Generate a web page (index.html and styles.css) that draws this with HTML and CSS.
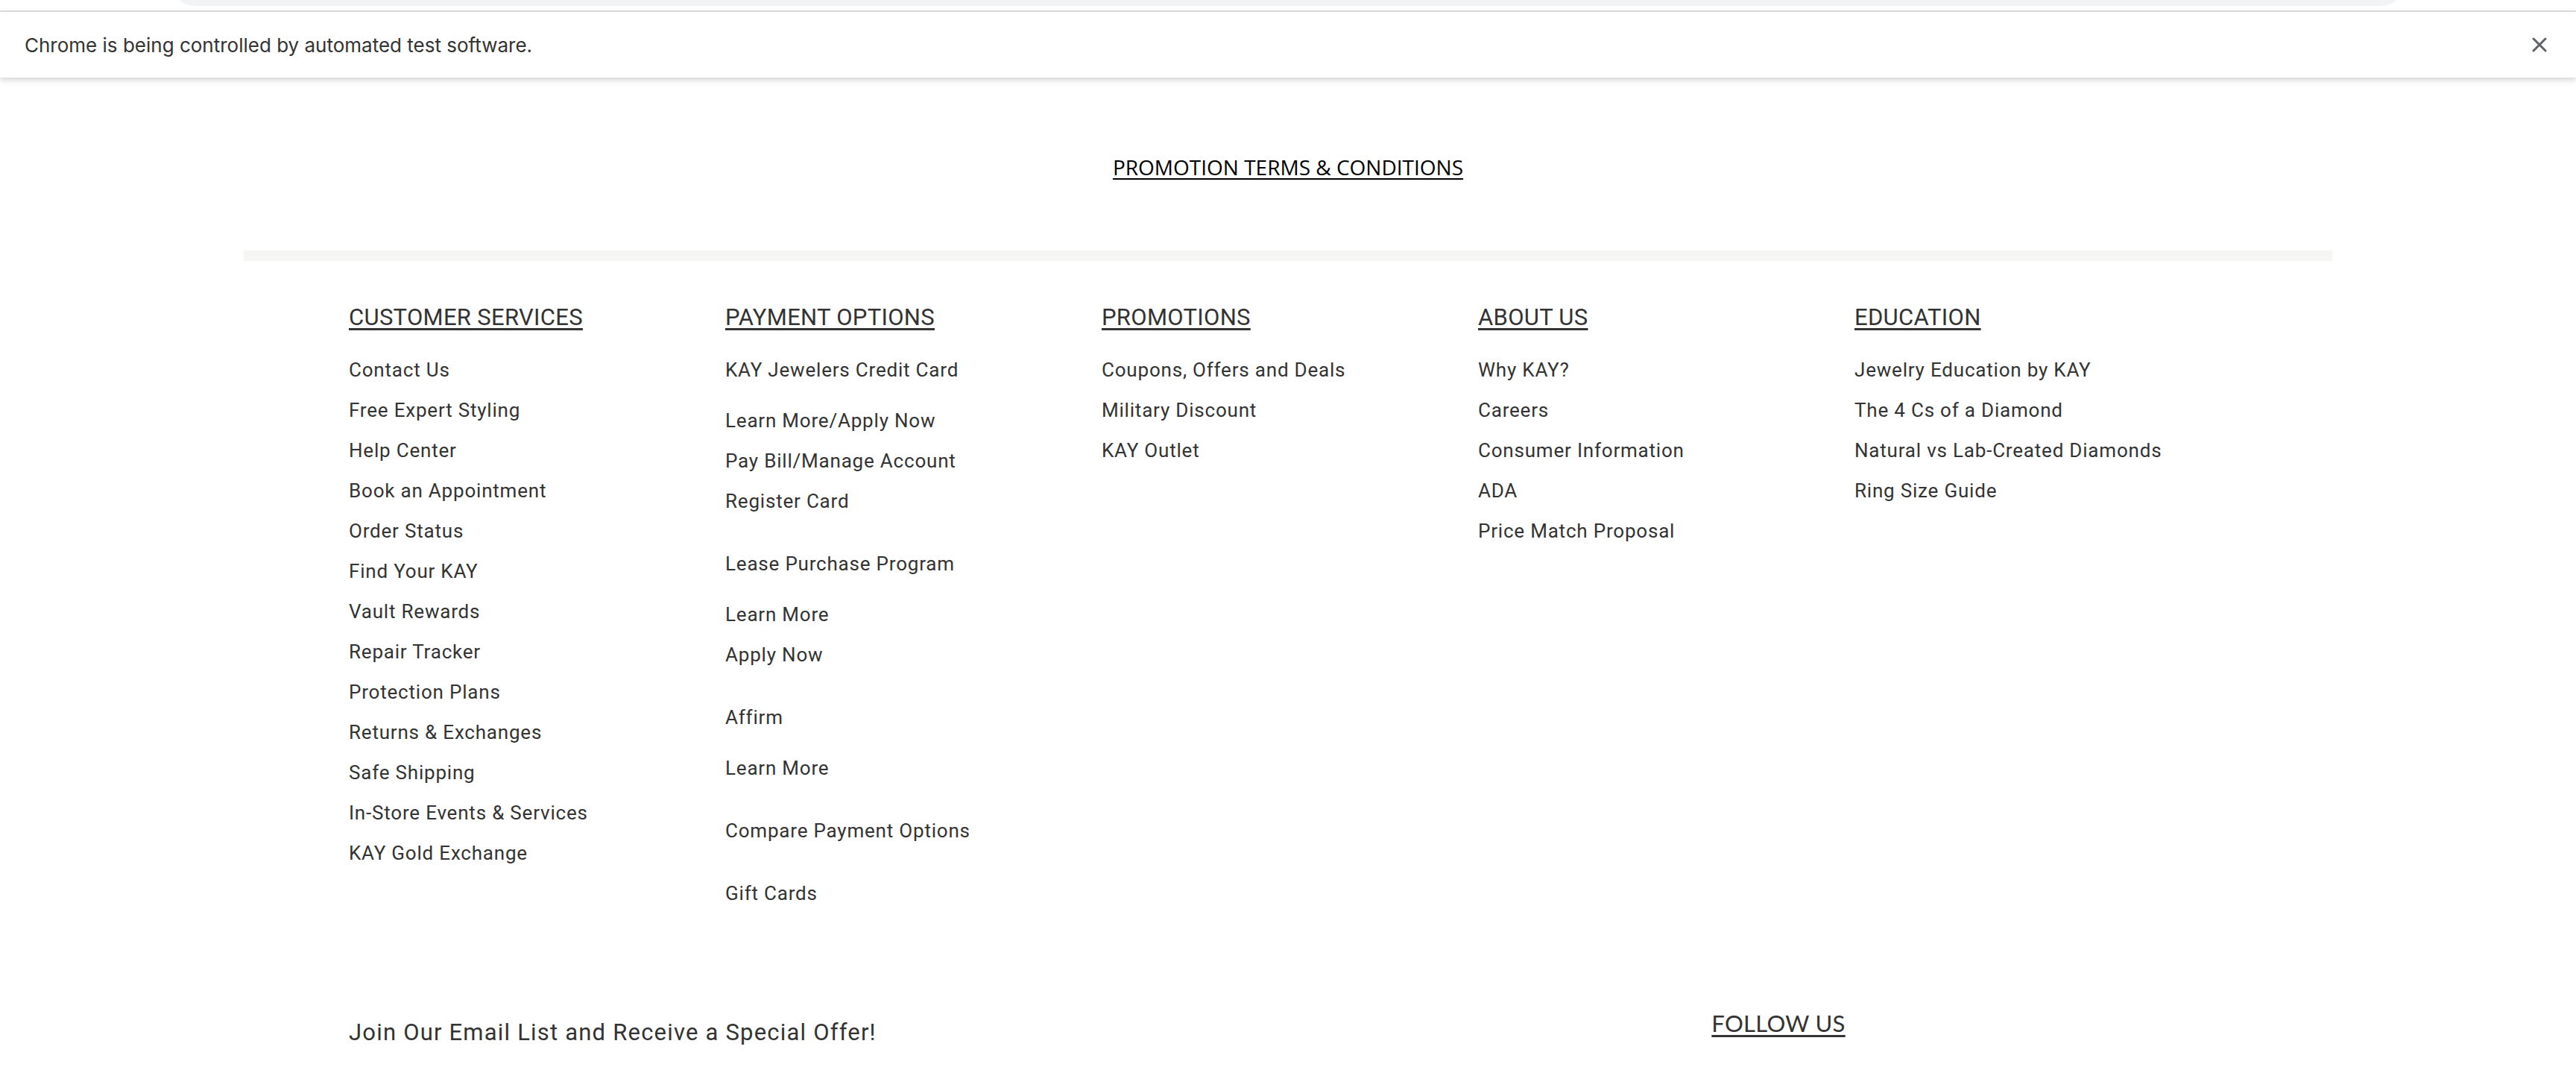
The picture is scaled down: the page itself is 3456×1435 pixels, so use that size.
FILE: index.html
```html
<!DOCTYPE html>
<html lang="en">
<head>
<meta charset="utf-8">
<title>KAY Footer</title>
<link rel="stylesheet" href="styles.css">
</head>
<body>
<div class="chrome-strip"><div class="omnibox"></div></div>
<div class="infobar">
  <span class="infobar-text">Chrome is being controlled by automated test software.</span>
  <svg class="infobar-close" width="20" height="20" viewBox="0 0 20 20" aria-hidden="true"><path d="M2 2 L18 18 M18 2 L2 18" stroke="#5f6368" stroke-width="3" stroke-linecap="round" fill="none"/></svg>
</div>

<main class="page">
  <div class="promo"><a class="promo-link" href="#">PROMOTION TERMS &amp; CONDITIONS</a></div>
  <div class="band"></div>

  <div class="cols">
    <section class="col">
      <h3 class="col-title">CUSTOMER SERVICES</h3>
      <ul class="links">
        <li>Contact Us</li>
        <li>Free Expert Styling</li>
        <li>Help Center</li>
        <li>Book an Appointment</li>
        <li>Order Status</li>
        <li>Find Your KAY</li>
        <li>Vault Rewards</li>
        <li>Repair Tracker</li>
        <li>Protection Plans</li>
        <li>Returns &amp; Exchanges</li>
        <li>Safe Shipping</li>
        <li>In-Store Events &amp; Services</li>
        <li>KAY Gold Exchange</li>
      </ul>
    </section>
    <section class="col">
      <h3 class="col-title">PAYMENT OPTIONS</h3>
      <ul class="links groups">
        <li class="group">KAY Jewelers Credit Card
          <ul class="links sub">
            <li>Learn More/Apply Now</li>
            <li>Pay Bill/Manage Account</li>
            <li>Register Card</li>
          </ul>
        </li>
        <li class="group">Lease Purchase Program
          <ul class="links sub">
            <li>Learn More</li>
            <li>Apply Now</li>
          </ul>
        </li>
        <li class="group">Affirm
          <ul class="links sub">
            <li>Learn More</li>
          </ul>
        </li>
        <li class="group">Compare Payment Options</li>
        <li class="group">Gift Cards</li>
      </ul>
    </section>
    <section class="col">
      <h3 class="col-title">PROMOTIONS</h3>
      <ul class="links">
        <li>Coupons, Offers and Deals</li>
        <li>Military Discount</li>
        <li>KAY Outlet</li>
      </ul>
    </section>
    <section class="col">
      <h3 class="col-title">ABOUT US</h3>
      <ul class="links">
        <li>Why KAY?</li>
        <li>Careers</li>
        <li>Consumer Information</li>
        <li>ADA</li>
        <li>Price Match Proposal</li>
      </ul>
    </section>
    <section class="col">
      <h3 class="col-title">EDUCATION</h3>
      <ul class="links">
        <li>Jewelry Education by KAY</li>
        <li>The 4 Cs of a Diamond</li>
        <li>Natural vs Lab-Created Diamonds</li>
        <li>Ring Size Guide</li>
      </ul>
    </section>
  </div>

  <div class="bottom">
    <div class="signup"><p class="signup-title">Join Our Email List and Receive a Special Offer!</p></div>
    <div class="follow"><h3 class="follow-title">FOLLOW US</h3></div>
  </div>
</main>
</body>
</html>
```
FILE: styles.css
```css
html, body {
  margin: 0;
  padding: 0;
  background: #ffffff;
}
body {
  font-family: Roboto, "Noto Sans", sans-serif;
  color: #333333;
}

/* Chrome automation infobar */
.chrome-strip {
  height: 14px;
  overflow: hidden;
  border-bottom: 2px solid #e0e0e0;
  background: #ffffff;
}
.omnibox {
  width: 2994px;
  height: 60px;
  margin: -52px 0 0 231px;
  border-radius: 30px;
  background: #f1f3f4;
}
.infobar {
  position: relative;
  z-index: 2;
  height: 88px;
  display: flex;
  align-items: center;
  justify-content: space-between;
  padding: 0 39px 0 33px;
  background: #ffffff;
  box-shadow: 0 3px 8px rgba(0, 0, 0, 0.18);
}
.infobar-text {
  font-family: Inter, Roboto, sans-serif;
  font-size: 26px;
  color: #333333;
}
.infobar-close {
  display: block;
}

/* Footer page */
.page {
  width: 2802px;
  margin: 0 auto;
}
.promo {
  padding-top: 101px;
  text-align: center;
  line-height: 38px;
}
.promo-link {
  font-family: "Open Sans", sans-serif;
  font-size: 28px;
  color: #000000;
  text-decoration: underline;
  text-decoration-thickness: 2px;
  text-underline-offset: 4px;
}
.band {
  height: 14px;
  margin-top: 87px;
  background: #f5f5f3;
}

.cols {
  display: grid;
  grid-template-columns: repeat(5, 505px);
  padding: 56px 0 0 141px;
}
.col-title {
  margin: 0 0 23px;
  font-size: 31px;
  font-weight: 400;
  line-height: 40px;
  letter-spacing: 0.3px;
  color: #333333;
  text-decoration: underline;
  text-decoration-thickness: 3px;
  text-underline-offset: 4px;
}
.links {
  list-style: none;
  margin: 0;
  padding: 0;
  font-size: 26px;
  line-height: 54px;
  letter-spacing: 0.8px;
  white-space: nowrap;
}
.group {
  margin-bottom: 30px;
}
.group:last-child {
  margin-bottom: 0;
}
.sub {
  margin-top: 14px;
}

.bottom {
  display: grid;
  grid-template-columns: 1314px 1208px;
  align-items: start;
  margin-top: 127px;
  padding-left: 141px;
}
.signup-title {
  margin: 13px 0 0;
  font-size: 31px;
  font-weight: 400;
  line-height: 40px;
  letter-spacing: 1.2px;
}
.follow {
  text-align: center;
}
.follow-title {
  display: inline-block;
  margin: 0;
  font-family: Lato, sans-serif;
  font-size: 31px;
  font-weight: 400;
  line-height: 40px;
  letter-spacing: 0.3px;
  text-decoration: underline;
  text-decoration-thickness: 3px;
  text-underline-offset: 4px;
}
```
